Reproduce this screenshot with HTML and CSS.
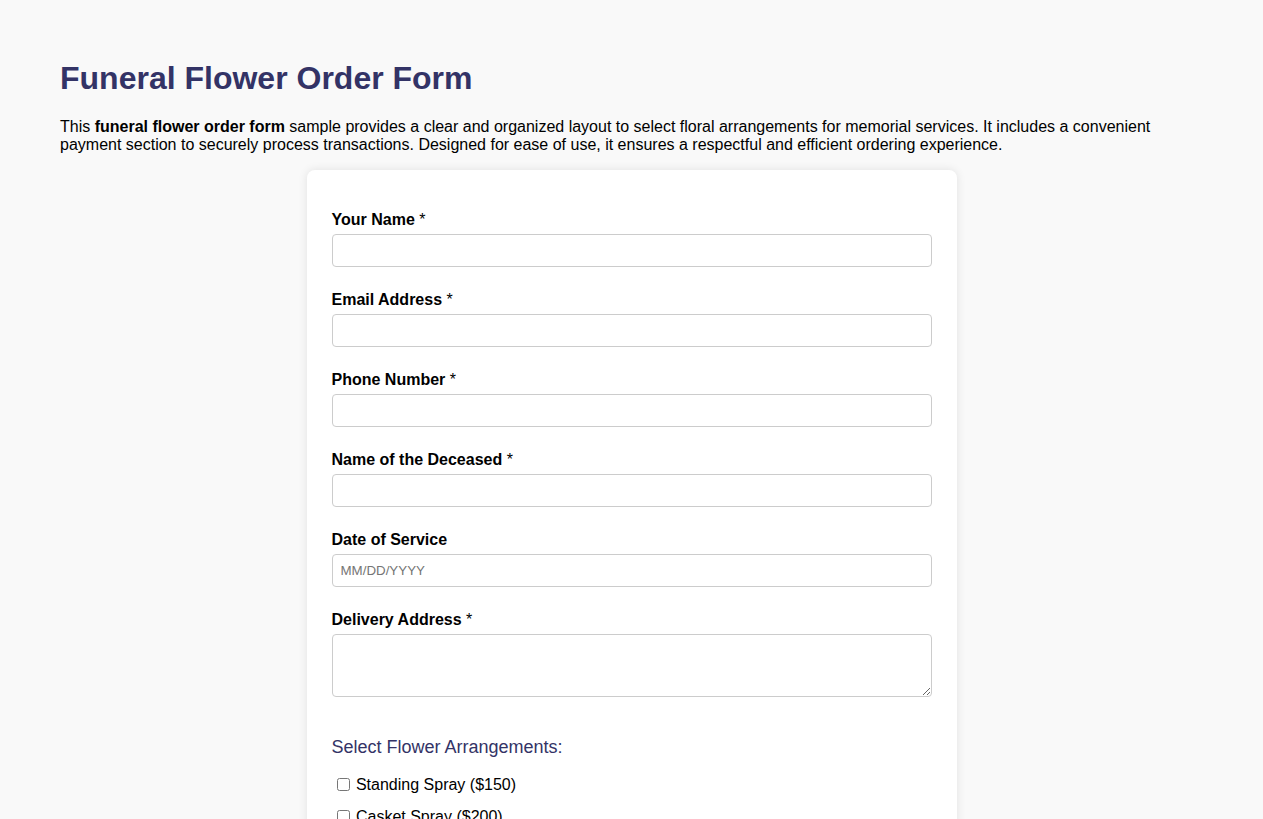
FILE: index.html
```html
<!DOCTYPE html>
<html lang="en">
<head>
<meta charset="utf-8">
<title>Funeral Flower Order Form</title>
<link rel="stylesheet" href="styles.css">
</head>
<body>
<div class="page">
  <h1 class="title">Funeral Flower Order Form</h1>
  <p class="intro">This <strong>funeral flower order form</strong> sample provides a clear and organized layout to select floral arrangements for memorial services. It includes a convenient payment section to securely process transactions. Designed for ease of use, it ensures a respectful and efficient ordering experience.</p>

  <form class="card">
    <div class="field">
      <label class="label" for="name">Your Name <span class="req">*</span></label>
      <input class="input" id="name" type="text">
    </div>
    <div class="field">
      <label class="label" for="email">Email Address <span class="req">*</span></label>
      <input class="input" id="email" type="email">
    </div>
    <div class="field">
      <label class="label" for="phone">Phone Number <span class="req">*</span></label>
      <input class="input" id="phone" type="tel">
    </div>
    <div class="field">
      <label class="label" for="deceased">Name of the Deceased <span class="req">*</span></label>
      <input class="input" id="deceased" type="text">
    </div>
    <div class="field">
      <label class="label" for="date">Date of Service</label>
      <input class="input" id="date" type="text" placeholder="MM/DD/YYYY">
    </div>
    <div class="field">
      <label class="label" for="address">Delivery Address <span class="req">*</span></label>
      <textarea class="input textarea" id="address" rows="3"></textarea>
    </div>

    <h3 class="section-title">Select Flower Arrangements:</h3>
    <div class="options">
      <label class="option"><input type="checkbox"> Standing Spray ($150)</label>
      <label class="option"><input type="checkbox"> Casket Spray ($200)</label>
      <label class="option"><input type="checkbox"> Wreath ($120)</label>
      <label class="option"><input type="checkbox"> Sympathy Bouquet ($80)</label>
    </div>
  </form>
</div>
</body>
</html>
```
FILE: styles.css
```css
html, body {
  margin: 0;
  padding: 0;
}
body {
  background: #f9f9f9;
  font-family: "Liberation Sans", Arial, sans-serif;
  color: #000;
}
.page {
  padding: 36px 60px 40px;
}
.title {
  font-size: 32px;
  font-weight: bold;
  color: #333366;
  margin: 24px 0 21px;
}
.intro {
  font-size: 16px;
  margin: 0 0 16px;
}
.card {
  max-width: 650px;
  box-sizing: border-box;
  margin: 0 auto;
  background: #fff;
  border-radius: 8px;
  box-shadow: 0 0 10px rgba(0, 0, 0, 0.1);
  padding: 41px 25px 30px;
}
.field {
  margin-bottom: 24px;
}
.label {
  display: block;
  font-weight: bold;
  font-size: 16px;
  line-height: 18px;
  margin-bottom: 5px;
}
.req {
  font-weight: normal;
}
.input {
  display: block;
  box-sizing: border-box;
  width: 100%;
  height: 33px;
  padding: 8px;
  border: 1px solid #ccc;
  border-radius: 4px;
  font-family: "Liberation Sans", Arial, sans-serif;
  font-size: 13.333px;
  background: #fff;
}
.input::placeholder {
  color: #757575;
}
.textarea {
  height: 63px;
}
.section-title {
  font-size: 18px;
  font-weight: normal;
  color: #333366;
  margin: 40px 0 18px;
}
.options {
  display: flex;
  flex-direction: column;
  gap: 14px;
}
.option {
  font-size: 16px;
  padding-left: 1px;
}
.option input {
  margin: 0 2px 0 4px;
  vertical-align: -1px;
}
```
